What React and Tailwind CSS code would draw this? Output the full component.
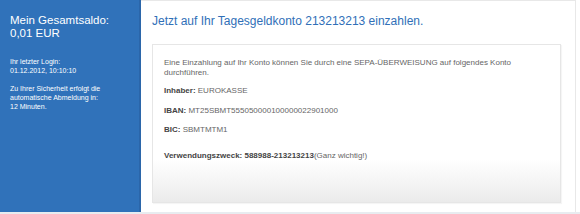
import React from 'react';

const font = { fontFamily: '"Liberation Sans", Arial, sans-serif' };

const Sidebar = () => (
  <div className="w-[141px] shrink-0 bg-[#3072ba] border-r-2 border-[#2b66aa] pl-[10px] pr-2 pt-[14px] text-white">
    <div className="text-[11.5px] leading-[13px]">
      <div>Mein Gesamtsaldo:</div>
      <div>0,01 EUR</div>
    </div>
    <div className="mt-[17px] text-[7px] leading-[9px]">
      <p>
        Ihr letzter Login:
        <br />
        01.12.2012, 10:10:10
      </p>
      <p className="mt-[9px]">
        Zu Ihrer Sicherheit erfolgt die
        <br />
        automatische Abmeldung in:
        <br />
        12 Minuten.
      </p>
    </div>
  </div>
);

const DepositBox = () => (
  <div className="h-[159px] border border-[#e6e6e6] shadow-[1px_1px_1px_rgba(0,0,0,0.04)] bg-[linear-gradient(to_bottom,#ffffff_0%,#ffffff_73%,#ebebeb_100%)] px-[11px] pt-[13px] text-[8px] leading-[9.5px] text-[#666]">
    <p>
      Eine Einzahlung auf Ihr Konto können Sie durch eine SEPA-ÜBERWEISUNG auf folgendes Konto
      <br />
      durchführen.
    </p>
    <p className="mt-[9px]">
      <span className="font-bold text-[#444]">Inhaber:</span> EUROKASSE
    </p>
    <p className="mt-[10px]">
      <span className="font-bold text-[#444]">IBAN:</span> MT25SBMT555050000100000022901000
    </p>
    <p className="mt-[9.5px]">
      <span className="font-bold text-[#444]">BIC:</span> SBMTMTM1
    </p>
    <p className="mt-[17px]">
      <span className="font-bold text-[#444]">Verwendungszweck: 588988-213213213</span>(Ganz wichtig!)
    </p>
  </div>
);

export default function App() {
  return (
    <div className="w-[580px] h-[214px] bg-[#e8ecf0] overflow-hidden" style={font}>
      <div className="flex h-[212px]">
        <Sidebar />
        <div className="w-[435px] bg-white border-r border-t border-[#e8e8e8] pl-[11px] pr-[14px] pt-[12px]">
          <h1 className="text-[12px] leading-[16px] text-[#3070b8]">
            Jetzt auf Ihr Tagesgeldkonto 213213213 einzahlen.
          </h1>
          <div className="mt-[15px]">
            <DepositBox />
          </div>
        </div>
        <div className="flex-1 bg-white" />
      </div>
    </div>
  );
}
